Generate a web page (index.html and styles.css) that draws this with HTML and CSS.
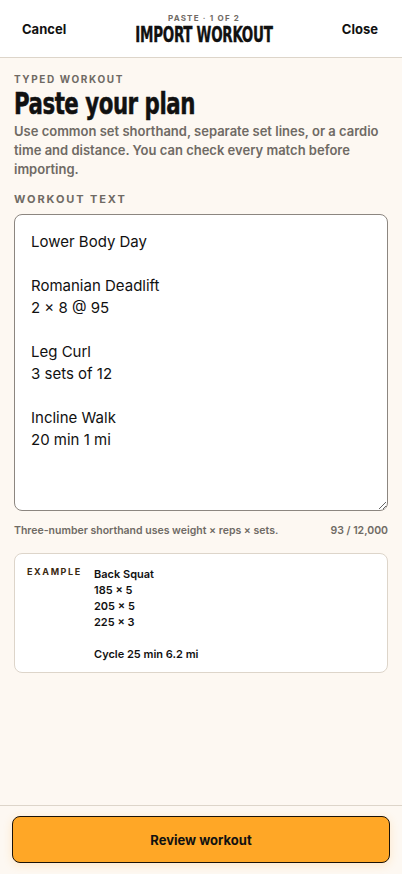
FILE: index.html
```html
<!doctype html>
<html lang="en">
<head>
    <meta charset="UTF-8">
    <meta name="viewport" content="width=device-width, initial-scale=1.0">
    <title>Import Workout</title>
    <link rel="stylesheet" href="styles.css">
</head>
<body>
<div id="app">
    <header class="topbar">
        <button class="text-btn">Cancel</button>
        <div class="topbar-title">
            <div class="step">PASTE · 1 OF 2</div>
            <h1><span class="squeeze">IMPORT WORKOUT</span></h1>
        </div>
        <button class="text-btn">Close</button>
    </header>

    <main class="content">
        <div class="eyebrow">TYPED WORKOUT</div>
        <h2 class="heading"><span class="squeeze">Paste your plan</span></h2>
        <p class="lead">Use common set shorthand, separate set lines, or a cardio time and distance. You can check every match before importing.</p>

        <label class="field-label" for="workout-text">WORKOUT TEXT</label>
        <textarea id="workout-text" class="workout-input" spellcheck="false">Lower Body Day

Romanian Deadlift
2 × 8 @ 95

Leg Curl
3 sets of 12

Incline Walk
20 min 1 mi</textarea>
        <div class="field-help">
            <span>Three-number shorthand uses weight × reps × sets.</span>
            <span>93 / 12,000</span>
        </div>

        <div class="example-card">
            <div class="example-tag">EXAMPLE</div>
            <div class="example-body">
                <div>Back Squat</div>
                <div>185 × 5</div>
                <div>205 × 5</div>
                <div>225 × 3</div>
                <div class="blank"></div>
                <div>Cycle 25 min 6.2 mi</div>
            </div>
        </div>
    </main>

    <footer class="bottombar">
        <button class="primary-btn">Review workout</button>
    </footer>
</div>
</body>
</html>
```

FILE: styles.css
```css
*, *::after, *::before {
    box-sizing: border-box;
    margin: 0;
    padding: 0;
}

:root {
    --bg: #fdf8f2;
    --ink: #111;
    --muted: #6f6a64;
    --line: #ddd5ca;
    --condensed: "DejaVu Sans", sans-serif;
}

body {
    margin: 0;
    background: var(--bg);
    font-family: "Inter", "Noto Sans", sans-serif;
    color: var(--ink);
}

#app {
    width: 100vw;
    height: 100vh;
    display: flex;
    flex-direction: column;
}

button {
    font-family: inherit;
    border: none;
    background: none;
    color: inherit;
    cursor: pointer;
}

.topbar {
    height: 58px;
    flex-shrink: 0;
    background: #fff;
    border-bottom: 1px solid var(--line);
    display: flex;
    align-items: center;
    justify-content: space-between;
    padding: 0 24px 0 22px;
}

.text-btn {
    font-size: 13px;
    font-weight: 700;
    padding-top: 1px;
}

.topbar-title {
    text-align: center;
    padding-top: 2px;
}

.step {
    font-size: 8px;
    font-weight: 700;
    letter-spacing: 1.2px;
    color: var(--muted);
    line-height: 10px;
}

/* no narrow display face installed: squeeze the condensed one */
.squeeze {
    display: inline-block;
    -webkit-text-stroke: 0.35px currentColor;
}

.topbar-title h1 {
    font-family: var(--condensed);
    font-stretch: condensed;
    font-size: 20.5px;
    font-weight: 700;
    line-height: 24px;
    letter-spacing: -0.4px;
}

.topbar-title h1 .squeeze {
    transform: scaleX(0.73);
    transform-origin: center;
}

.content {
    flex: 1;
    padding: 15px 14px 0;
    display: flex;
    flex-direction: column;
}

.eyebrow,
.field-label {
    font-size: 10px;
    font-weight: 700;
    letter-spacing: 1.6px;
    color: var(--muted);
    line-height: 12px;
}

.heading {
    font-family: var(--condensed);
    font-stretch: condensed;
    font-size: 30px;
    font-weight: 700;
    line-height: 34px;
    letter-spacing: -0.6px;
    margin-top: 2px;
}

.heading .squeeze {
    transform: scaleX(0.79);
    transform-origin: left center;
    -webkit-text-stroke: 0.5px currentColor;
}

.lead {
    font-size: 13px;
    font-weight: 600;
    line-height: 19px;
    color: var(--muted);
    margin-top: 1px;
}

.field-label {
    display: block;
    margin-top: 14px;
    font-size: 11px;
    letter-spacing: 1.9px;
}

.workout-input {
    display: block;
    margin-top: 9px;
    width: 100%;
    height: 297px;
    border: 1px solid #8c8680;
    border-radius: 8px;
    background: #fff;
    padding: 16px 16px;
    font-family: "Inter", "Noto Sans", sans-serif;
    font-size: 15px;
    line-height: 22px;
    color: var(--ink);
    resize: vertical;
    outline: none;
}

.field-help {
    display: flex;
    justify-content: space-between;
    margin-top: 13px;
    font-size: 10.5px;
    font-weight: 600;
    color: var(--muted);
    line-height: 14px;
}

.example-card {
    margin-top: 15px;
    background: #fff;
    border: 1px solid var(--line);
    border-radius: 8px;
    padding: 12px 12px 10px;
    display: flex;
    gap: 13px;
}

.example-tag {
    font-size: 9px;
    font-weight: 700;
    letter-spacing: 1.6px;
    color: #3a2a12;
    line-height: 12px;
    width: 54px;
}

.example-body {
    font-size: 11px;
    font-weight: 600;
    line-height: 16px;
}

.example-body .blank {
    height: 16px;
}

.bottombar {
    flex-shrink: 0;
    border-top: 1px solid var(--line);
    padding: 10px 12px 11px;
}

.primary-btn {
    width: 100%;
    height: 47px;
    background: #ffa726;
    border: 1px solid #1a1208;
    border-radius: 8px;
    font-size: 13px;
    font-weight: 700;
    box-shadow: 0 2px 10px rgba(255, 167, 38, 0.2);
}
```
